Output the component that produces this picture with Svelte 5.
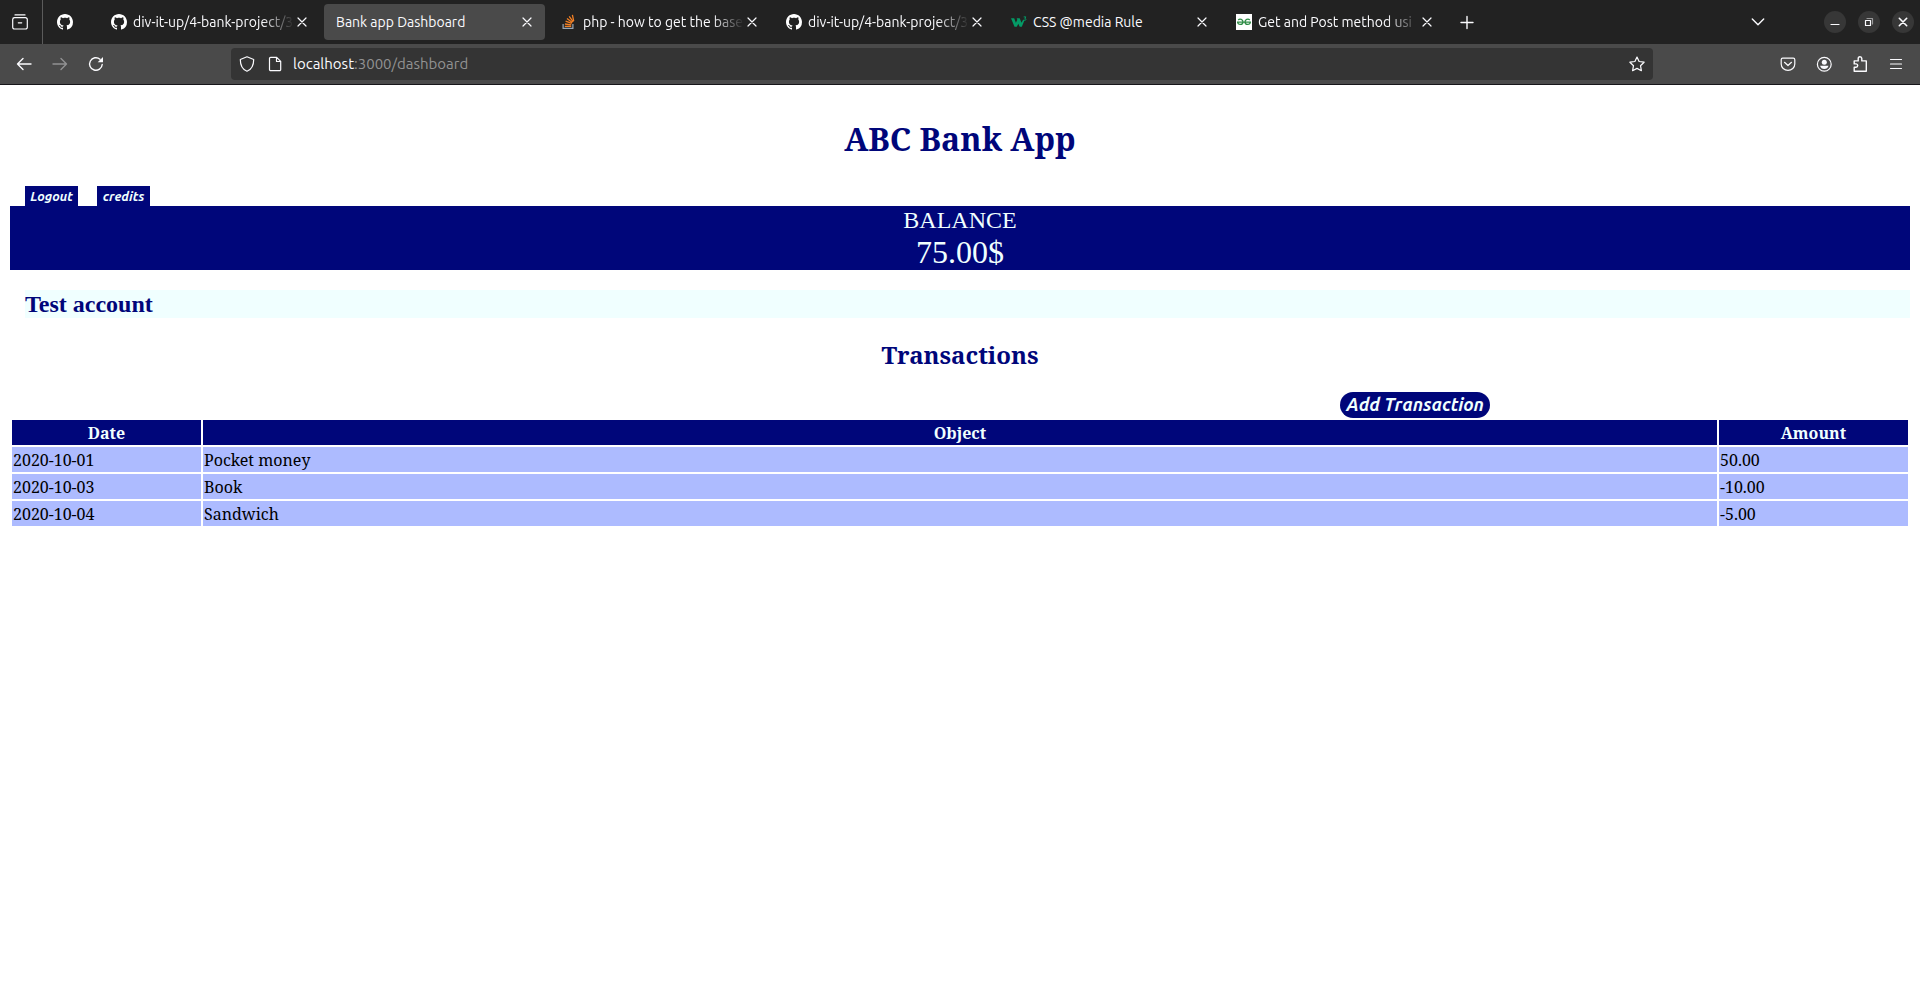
<script>
  const tabs = [
    { title: 'div-it-up/4-bank-project/3', icon: 'github', long: true },
    { title: 'Bank app Dashboard', icon: null, active: true },
    { title: 'php - how to get the base', icon: 'stack', long: true },
    { title: 'div-it-up/4-bank-project/3', icon: 'github', long: true },
    { title: 'CSS @media Rule', icon: 'w3' },
    { title: 'Get and Post method usi', icon: 'gfg', long: true }
  ];

  const transactions = [
    { date: '2020-10-01', object: 'Pocket money', amount: '50.00' },
    { date: '2020-10-03', object: 'Book', amount: '-10.00' },
    { date: '2020-10-04', object: 'Sandwich', amount: '-5.00' }
  ];
</script>

{#snippet favicon(name)}
  <svg class="icon" viewBox="0 0 16 16" aria-hidden="true">
    {#if name === 'github'}
      <path fill="#fff" d="M8 0C3.58 0 0 3.58 0 8c0 3.54 2.29 6.53 5.47 7.59.4.07.55-.17.55-.38 0-.19-.01-.82-.01-1.49-2.01.37-2.53-.49-2.69-.94-.09-.23-.48-.94-.82-1.13-.28-.15-.68-.52-.01-.53.63-.01 1.08.58 1.23.82.72 1.21 1.87.87 2.33.66.07-.52.28-.87.51-1.07-1.78-.2-3.64-.89-3.64-3.95 0-.87.31-1.59.82-2.15-.08-.2-.36-1.02.08-2.12 0 0 .67-.21 2.2.82.64-.18 1.32-.27 2-.27s1.36.09 2 .27c1.53-1.04 2.2-.82 2.2-.82.44 1.1.16 1.92.08 2.12.51.56.82 1.27.82 2.15 0 3.07-1.87 3.75-3.65 3.95.29.25.54.73.54 1.48 0 1.07-.01 1.93-.01 2.2 0 .21.15.46.55.38A8.01 8.01 0 0 0 16 8c0-4.42-3.58-8-8-8z" />
    {:else if name === 'stack'}
      <path fill="none" stroke="#9aa6b4" stroke-width="1.2" d="M2.1 10v4.4h9.8V10" />
      <path fill="none" stroke="#f48024" stroke-width="1.3" d="M3.8 12.4h6.4M3.9 10l6.4.8M4.6 7.2l6.1 2.2M6 4.6l5.3 4M8.2 2.4l4 5.4M11.4.9l1.3 6.3" />
    {:else if name === 'w3'}
      <path fill="#049a66" d="M0 4.2h3.2l1.7 4.6 1.4-3.1-.6-1.5h3l1.8 4.6 1.6-3.1h1.6l-2.9 7.1H8.7L7.3 9.7l-1.5 3.1H3.5z" />
      <path fill="none" stroke="#049a66" stroke-width="1" d="M12.7 2.9h2.2l-1.1 1.5c1.8.2 1.6 2.1-.6 1.8" />
    {:else if name === 'gfg'}
      <rect width="16" height="16" fill="#fff" />
      <path fill="none" stroke="#2f8d46" stroke-width="1.3" d="M1 8.1h14M2.2 5.9C4 4.4 7 5.5 7 7.9c0 3.200-5 3.300-5.300.300M13.800 5.900C12 4.400 9 5.500 9 7.900c0 3.200 5 3.300 5.300.300" />
    {/if}
  </svg>
{/snippet}

<div class="browser">
  <div class="tabbar">
    <button class="tool view" aria-label="Recent browsing">
      <svg class="icon" viewBox="0 0 16 16"><path d="M3 .9h10M2.500 3.700h11a1.800 1.800 0 0 1 1.800 1.800v7.700a1.800 1.800 0 0 1-1.800 1.800h-11a1.800 1.800 0 0 1-1.800-1.800V5.500a1.800 1.800 0 0 1 1.800-1.800zM6.300 8.800h3.400" /></svg>
    </button>
    <button class="pinned" aria-label="GitHub">{@render favicon('github')}</button>
    <div class="tabs">
      {#each tabs as tab}
        <div class="tab" class:active={tab.active}>
          {#if tab.icon}{@render favicon(tab.icon)}{/if}
          <button class="title" class:fade={tab.long}>{tab.title}</button>
          <button class="close" aria-label="Close tab">
            <svg class="icon" viewBox="0 0 16 16"><path d="M4 4l8 8M12 4l-8 8" /></svg>
          </button>
        </div>
      {/each}
    </div>
    <button class="tool" aria-label="New tab">
      <svg class="icon" viewBox="0 0 16 16"><path stroke-width="1.400" d="M8 2.500v12M2 8.500h12" /></svg>
    </button>
    <span class="spacer"></span>
    <button class="tool list" aria-label="List all tabs">
      <svg class="icon" viewBox="0 0 16 16"><path stroke-width="1.400" d="M2.300 5L8 10.700 13.700 5" /></svg>
    </button>
    <div class="window">
      <button aria-label="Minimize"><svg class="icon" viewBox="0 0 16 16"><path d="M4 10.500h8" /></svg></button>
      <button aria-label="Restore"><svg class="icon" viewBox="0 0 16 16"><path d="M4.500 6.500h5v5h-5z" /><path opacity=".5" d="M6 4.500h5.500V10" /></svg></button>
      <button aria-label="Close"><svg class="icon" viewBox="0 0 16 16"><path stroke-width="1.600" d="M4.300 4.300l7.400 7.400M11.700 4.300l-7.400 7.400" /></svg></button>
    </div>
  </div>

  <div class="toolbar">
    <div class="nav">
      <button class="tool" aria-label="Back"><svg class="icon" viewBox="0 0 16 16"><path stroke-width="1.400" d="M15 8H1.500M7 2.500L1.500 8 7 13.500" /></svg></button>
      <button class="tool dim" aria-label="Forward"><svg class="icon" viewBox="0 0 16 16"><path stroke-width="1.400" d="M1 8h13.500M9 2.500L14.500 8 9 13.500" /></svg></button>
      <button class="tool" aria-label="Reload"><svg class="icon" viewBox="0 0 16 16"><path stroke-width="1.400" d="M14.200 8.500A6.300 6.300 0 1 1 12 3.200" /><path class="solid" d="M15 1v5.300H9.700z" /></svg></button>
    </div>
    <div class="urlbar">
      <svg class="icon" viewBox="0 0 16 16"><path d="M8 .8l6.700 2.700c0 5.500-2.200 10-6.700 11.800C3.500 13.500 1.300 9 1.300 3.500z" /></svg>
      <svg class="icon" viewBox="0 0 16 16"><path d="M3.700 1.300h6l4 4v8.200a1.200 1.200 0 0 1-1.200 1.200H3.700a1.200 1.200 0 0 1-1.200-1.200v-11a1.200 1.200 0 0 1 1.200-1.200zM9.500 1.500v4h4" /></svg>
      <span class="address">localhost<i>:3000/dashboard</i></span>
      <svg class="icon" viewBox="0 0 16 16"><path d="M8 1l2.100 4.500 5 .700-3.600 3.500.9 5L8 12.400l-4.400 2.300.9-5L.9 6.200l5-.700z" /></svg>
    </div>
    <div class="nav">
      <button class="tool" aria-label="Save to Pocket"><svg class="icon" viewBox="0 0 16 16"><path d="M2.700 2.200h10.600a1.500 1.500 0 0 1 1.500 1.500V8a6.800 6.300 0 0 1-13.600 0V3.700a1.500 1.500 0 0 1 1.500-1.500zM4.500 6.300L8 9.500l3.500-3.200" /></svg></button>
      <button class="tool" aria-label="Account"><svg class="icon" viewBox="0 0 16 16"><circle cx="8.300" cy="8.300" r="6.900" /><circle class="solid" cx="8.300" cy="6.200" r="2.500" /><path class="solid" d="M4.100 9.800h8.400c-.4 2-2.100 3.300-4.200 3.300s-3.800-1.300-4.200-3.300z" /></svg></button>
      <button class="tool" aria-label="Extensions"><svg class="icon" viewBox="0 0 16 16"><path stroke-width="1.400" d="M2.200 15.200V11.300h1.800a1.700 1.700 0 0 0 0-3.400H2.200V4.900h4V2.600a1.800 1.800 0 0 1 3.600 0v2.300h4.500v10.300z" /></svg></button>
      <button class="tool" aria-label="Menu"><svg class="icon" viewBox="0 0 16 16"><path d="M2.500 3.500h11M2.500 8h11M2.500 12.500h11" /></svg></button>
    </div>
  </div>
</div>

<main>
  <h1>ABC Bank App</h1>
  <nav class="links">
    <a href="#logout">Logout</a>
    <a href="#credits">credits</a>
  </nav>
  <section class="balance">
    <div class="label">BALANCE</div>
    <div class="sum">75.00$</div>
  </section>
  <h2 class="account">Test account</h2>
  <h2 class="heading">Transactions</h2>
  <div class="actions"><button class="add">Add Transaction</button></div>
  <table>
    <thead>
      <tr><th class="narrow">Date</th><th>Object</th><th class="narrow">Amount</th></tr>
    </thead>
    <tbody>
      {#each transactions as row}
        <tr><td>{row.date}</td><td>{row.object}</td><td>{row.amount}</td></tr>
      {/each}
    </tbody>
  </table>
</main>

<style>
  :global(body) {
    background: #fff;
  }

  button {
    margin: 0;
    padding: 0;
    border: 0;
    background: none;
    color: inherit;
    font: inherit;
  }

  .browser {
    color: #fbfbfe;
    font: 14px/20px Ubuntu, 'Noto Sans', sans-serif;
    border-bottom: 1px solid #17161a;
  }

  .icon {
    display: block;
    flex: none;
    width: 16px;
    height: 16px;
    fill: none;
    stroke: currentColor;
    stroke-width: 1.2;
    stroke-linejoin: round;
    stroke-linecap: round;
  }

  .icon > [fill] {
    stroke-linecap: butt;
    stroke-linejoin: miter;
  }

  .icon > [fill^='#'] {
    stroke: none;
  }

  .solid {
    fill: currentColor;
    stroke: none;
  }

  .tabbar {
    display: flex;
    align-items: center;
    height: 44px;
    background: #222;
  }

  .tool {
    display: grid;
    place-items: center;
    width: 36px;
    height: 32px;
  }

  .view {
    width: 40px;
    height: 44px;
    box-sizing: content-box;
    border-right: 1px solid #5b5b5b;
    padding-right: 2px;
  }

  .pinned {
    padding: 0 26px 0 14px;
  }

  .tabs {
    display: flex;
    gap: 4px;
    margin-right: 4px;
  }

  .tab {
    display: flex;
    align-items: center;
    gap: 6px;
    box-sizing: border-box;
    width: 221px;
    height: 36px;
    padding: 0 10px 0 12px;
    border-radius: 4px;
  }

  .tab.active {
    background: #4a4a4a;
  }

  .title {
    flex: 1;
    min-width: 0;
    margin-right: -6px;
    overflow: hidden;
    text-align: left;
    white-space: nowrap;
  }

  .title.fade {
    mask-image: linear-gradient(to left, transparent, #000 32px);
  }

  .spacer {
    flex: 1;
  }

  .list {
    margin-right: 48px;
  }

  .window {
    display: flex;
    gap: 12px;
    padding-right: 6px;
  }

  .window button {
    display: grid;
    place-items: center;
    width: 22px;
    height: 22px;
    border-radius: 50%;
    background: #373737;
  }

  .toolbar {
    display: flex;
    align-items: center;
    justify-content: space-between;
    gap: 117px;
    height: 40px;
    padding: 0 6px;
    background: #4a4a4a;
  }

  .nav {
    display: flex;
  }

  .dim {
    opacity: 0.4;
  }

  .urlbar {
    display: flex;
    flex: 1;
    align-items: center;
    gap: 12px;
    height: 32px;
    padding: 0 8px;
    border-radius: 4px;
    background: #343434;
  }

  .address {
    flex: 1;
    margin-left: -2px;
    font-size: 15px;
  }

  .address i {
    color: #929292;
    font-style: normal;
  }

  main {
    padding: 30px 10px 10px;
    font: 16px/23px 'Noto Serif', 'DejaVu Serif Condensed', 'DejaVu Serif', serif;
  }

  h1,
  h2 {
    margin: 0;
    color: #00067a;
  }

  h1 {
    font-size: 32px;
    line-height: 48px;
    text-align: center;
  }

  .links {
    display: flex;
    gap: 19px;
    padding: 23px 15px 0;
  }

  .links a {
    width: 53px;
    background: #00067a;
    color: #f0ffff;
    font: italic bold 13px/20px Ubuntu, 'Noto Sans', sans-serif;
    text-align: center;
    text-decoration: none;
  }

  .balance {
    background: #00067a;
    color: #f0ffff;
    font-family: 'Liberation Serif', serif;
    text-align: center;
  }

  .label {
    font-size: 24px;
    line-height: 28px;
  }

  .sum {
    font-size: 32px;
    line-height: 36px;
  }

  .account {
    margin: 20px 0 0 15px;
    background: #f0ffff;
    font: bold 24px/28px 'Liberation Serif', serif;
  }

  .heading {
    margin: 20px 0;
    font-size: 24px;
    line-height: 34px;
    text-align: center;
  }

  .actions {
    display: flex;
    justify-content: flex-end;
    padding-right: 22.1%;
  }

  .add {
    width: 150px;
    padding-bottom: 2px;
    border-radius: 13px;
    background: #00067a;
    color: #f0ffff;
    font: italic bold 18px/24px Ubuntu, 'Noto Sans', sans-serif;
    white-space: nowrap;
  }

  table {
    width: 100%;
    border-spacing: 2px;
    table-layout: fixed;
  }

  th,
  td {
    padding: 2px 1px 0;
  }

  th {
    background: #00067a;
    color: #f0ffff;
  }

  .narrow {
    width: 187px;
  }

  td {
    background: #adbbff;
    color: #000;
  }
</style>
